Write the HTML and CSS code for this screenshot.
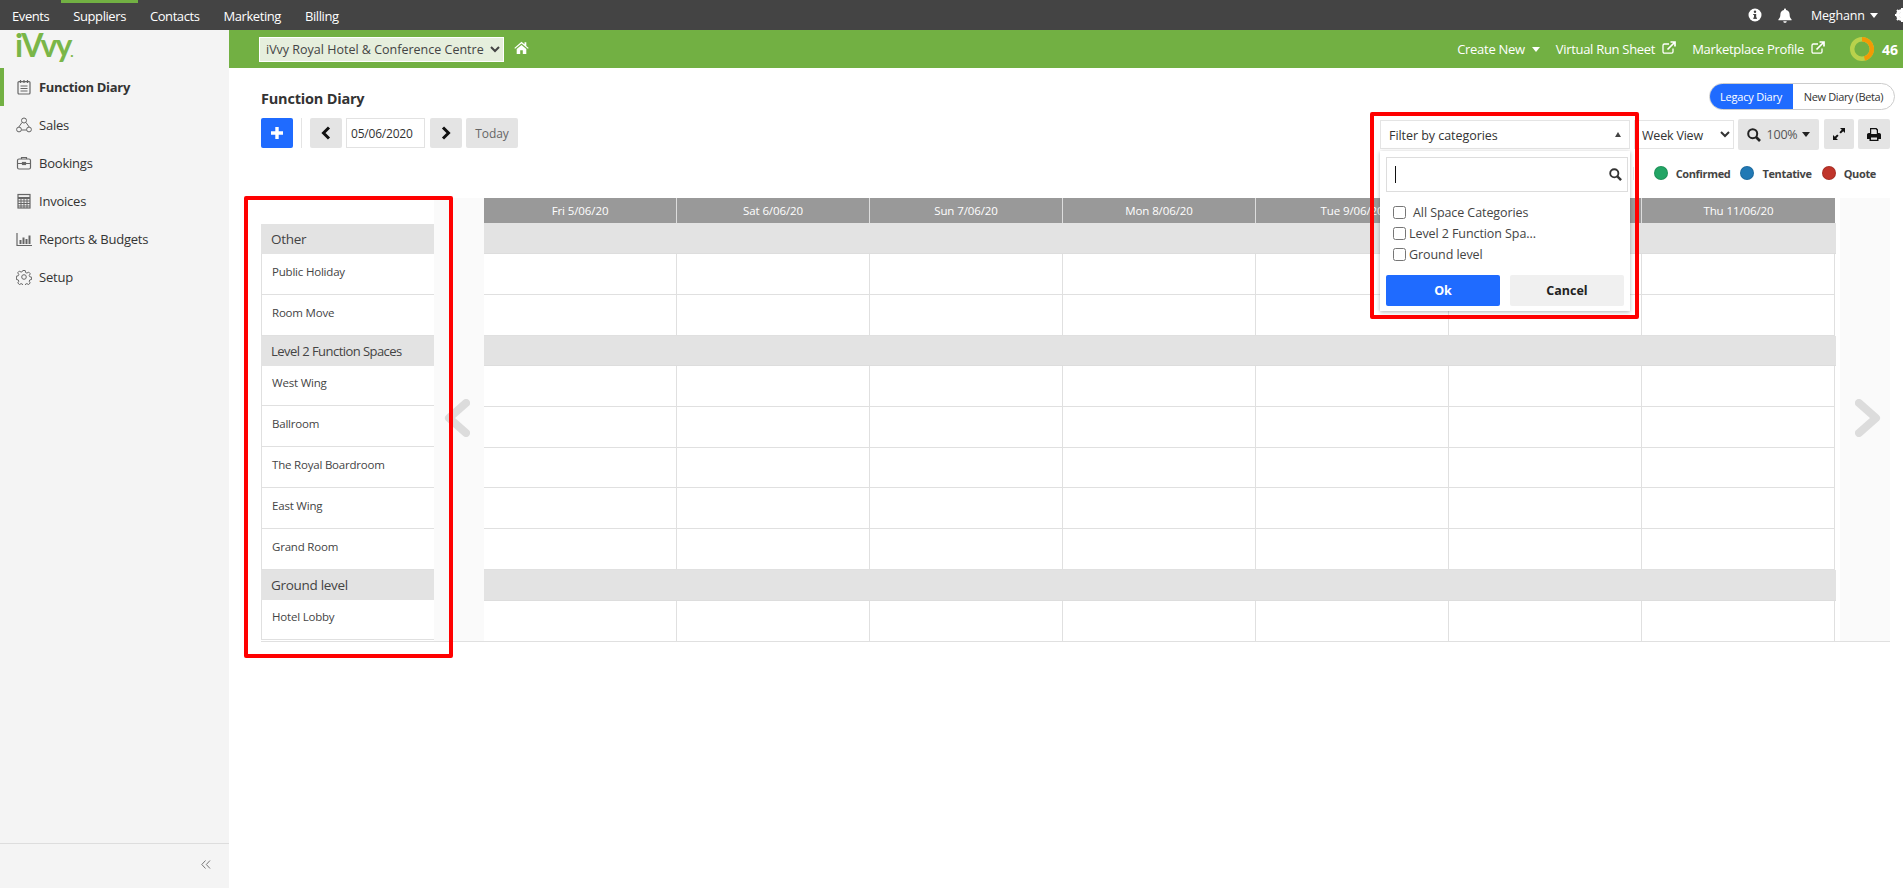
FILE: index.html
```html
<!DOCTYPE html>
<html lang="en">
<head>
<meta charset="utf-8">
<title>Function Diary</title>
<link rel="stylesheet" href="styles.css">
</head>
<body>
<header class="topbar">
  <nav class="topnav">
    <a class="topnav-item">Events</a>
    <a class="topnav-item is-active">Suppliers</a>
    <a class="topnav-item">Contacts</a>
    <a class="topnav-item">Marketing</a>
    <a class="topnav-item">Billing</a>
  </nav>
  <div class="topright">
    <svg class="ico-info" viewBox="0 0 14 14"><circle cx="7" cy="7" r="6.500" fill="#fff"/><rect x="6" y="6" width="2.200" height="4.600" fill="#444"/><rect x="5.200" y="9.600" width="3.800" height="1.200" fill="#444"/><rect x="5.200" y="6" width="2" height="1" fill="#444"/><circle cx="7" cy="3.800" r="1.200" fill="#444"/></svg>
    <svg class="ico-bell" viewBox="0 0 14 15"><path d="M7 0.500c.6 0 1 .4 1 1v.4c2.200.4 3.600 2.200 3.600 4.400 0 3 .9 4 2 5.200v.8H.4v-.8c1.100-1.200 2-2.200 2-5.200 0-2.200 1.400-4 3.600-4.400v-.4c0-.6.4-1 1-1zM5.300 13.300h3.400c0 1-.8 1.500-1.700 1.500s-1.700-.5-1.700-1.500z" fill="#fff"/></svg>
    <span class="user">Meghann</span>
    <span class="caret caret-white"></span>
    <svg class="ico-gear" viewBox="0 0 14 14"><circle cx="7" cy="7" r="4.500" fill="none" stroke="#fff" stroke-width="3"/><path d="M7 0v14M0 7h14M2 2l10 10M12 2L2 12" stroke="#fff" stroke-width="2"/></svg>
  </div>
</header>

<div class="shell">
  <aside class="sidebar">
    <div class="logo">iVvy<span class="logo-dot">.</span></div>
    <nav class="sidenav">
      <a class="sideitem is-active">
        <svg class="sideicon" viewBox="0 0 16 16" fill="none" stroke="#666" stroke-width="1.200"><rect x="2" y="2.600" width="12" height="12.400" rx="1"/><path d="M4.500 1v3M8 1v3M11.500 1v3M4.500 7h7M4.500 9.500h7M4.500 12h7"/></svg>
        <span>Function Diary</span>
      </a>
      <a class="sideitem">
        <svg class="sideicon" viewBox="0 0 16 16" fill="none" stroke="#666" stroke-width="1"><circle cx="8" cy="3.500" r="2.500"/><circle cx="3" cy="12.500" r="2.400"/><circle cx="13" cy="12.500" r="2.400"/><path d="M6 5.500L2.800 10M10 5.500l3.200 4.500M5.400 13h5.200"/></svg>
        <span>Sales</span>
      </a>
      <a class="sideitem">
        <svg class="sideicon" viewBox="0 0 16 16" fill="none" stroke="#666" stroke-width="1.200"><rect x="1.500" y="4" width="13" height="10" rx="1.500"/><path d="M5.500 4V2.500h5V4M1.500 8.500h13"/><rect x="6.500" y="7.500" width="3" height="2" fill="#666"/></svg>
        <span>Bookings</span>
      </a>
      <a class="sideitem">
        <svg class="sideicon" viewBox="0 0 16 16" fill="none" stroke="#666"><rect x="2" y="1.500" width="12" height="13.500" fill="#eee" stroke-width="1.200"/><path d="M2 5h12" stroke-width="2"/><path d="M5 6v9M8 6v9M11 6v9M2 8h12M2 10.500h12M2 13h12" stroke-width="1"/></svg>
        <span>Invoices</span>
      </a>
      <a class="sideitem">
        <svg class="sideicon" viewBox="0 0 16 16" fill="none" stroke="#666"><path d="M1 2v12.500h15" stroke-width="1.200"/><path d="M4.500 13V9M7.500 13V6.500M10.500 13V8M13.500 13V4.500" stroke-width="2"/></svg>
        <span>Reports &amp; Budgets</span>
      </a>
      <a class="sideitem">
        <svg class="sideicon" viewBox="0 0 16 16" fill="none" stroke="#666" stroke-width="1"><circle cx="8" cy="8" r="2.300"/><path d="M6.800 1.500h2.400l.4 2 1.300.6 1.800-1 1.600 1.700-1.100 1.700.6 1.300 1.800.4v2.300l-1.800.4-.6 1.300 1 1.700-1.600 1.700-1.700-1-1.300.5-.4 2H6.800l-.4-2-1.300-.5-1.700 1-1.600-1.700 1-1.700-.6-1.300-1.800-.4V7.200l1.800-.4.6-1.300-1.100-1.700 1.600-1.700 1.800 1 1.300-.6z"/></svg>
        <span>Setup</span>
      </a>
    </nav>
    <div class="sidefoot">
      <svg class="collapse" viewBox="0 0 10 9" fill="none" stroke="#777" stroke-width="1"><path d="M4.500.5L.8 4.500l3.700 4M9 .5L5.300 4.500 9 8.500"/></svg>
    </div>
  </aside>

  <div class="content">
    <div class="greenbar">
      <div class="green-left">
        <select class="hotel"><option>iVvy Royal Hotel &amp; Conference Centre</option></select>
        <svg class="ico-home" viewBox="0 0 15 13"><path d="M7.500.8L.3 6.900l.8.900L7.500 2.400l6.400 5.400.8-.9-2.400-2V1.300h-1.800v2L7.500.8zM2.700 8v5h3.500V9.300h2.600V13h3.500V8L7.500 3.900z" fill="#fff"/></svg>
      </div>
      <div class="green-right">
        <a class="glink">Create New <span class="caret caret-white"></span></a>
        <a class="glink">Virtual Run Sheet
          <svg class="ico-ext" viewBox="0 0 14 13" fill="none" stroke="#fff" stroke-width="1.300"><path d="M11 7.500v3.200c0 .9-.5 1.400-1.400 1.400H2.400C1.500 12.100 1 11.600 1 10.700V4.400C1 3.500 1.500 3 2.400 3H7"/><path d="M5.500 8.500L12.500 1.500M8.500 1h4.500v4.500" stroke-width="1.700"/></svg>
        </a>
        <a class="glink">Marketplace Profile
          <svg class="ico-ext" viewBox="0 0 14 13" fill="none" stroke="#fff" stroke-width="1.300"><path d="M11 7.500v3.200c0 .9-.5 1.400-1.400 1.400H2.400C1.500 12.100 1 11.600 1 10.700V4.400C1 3.500 1.500 3 2.400 3H7"/><path d="M5.500 8.500L12.500 1.500M8.500 1h4.500v4.500" stroke-width="1.700"/></svg>
        </a>
        <svg class="donut" viewBox="0 0 24 24" fill="none" stroke-width="4.400"><circle cx="12" cy="12" r="9.800" stroke="#b9d24c"/><path d="M12 2.200A9.800 9.800 0 0 1 14.500 21.500" stroke="#f29a05"/></svg>
        <b class="score">46</b>
      </div>
    </div>

    <main class="main">
      <div class="titlerow">
        <h1 class="title">Function Diary</h1>
        <div class="toggle">
          <a class="toggle-item is-on">Legacy Diary</a>
          <a class="toggle-item">New Diary (Beta)</a>
        </div>
      </div>

      <div class="toolbar">
        <div class="tools-left">
          <button class="btn btn-add"><svg class="ico-plus" viewBox="0 0 12 12"><path d="M4.300 0h3.400v4.300H12v3.400H7.700V12H4.300V7.700H0V4.300h4.300z" fill="#fff"/></svg></button>
          <span class="tool-sep"></span>
          <button class="btn btn-gray"><svg class="ico-chev" viewBox="0 0 10 14" fill="none" stroke="#111" stroke-width="3"><path d="M8 1.500L2.500 7 8 12.500"/></svg></button>
          <input class="date" type="text" value="05/06/2020">
          <button class="btn btn-gray"><svg class="ico-chev" viewBox="0 0 10 14" fill="none" stroke="#111" stroke-width="3"><path d="M2 1.500L7.500 7 2 12.500"/></svg></button>
          <button class="btn btn-today">Today</button>
        </div>
        <div class="tools-right">
          <div class="filter">
            <div class="filter-head"><span>Filter by categories</span><span class="caret-up"></span></div>
            <div class="filter-panel">
              <div class="filter-search">
                <span class="text-caret"></span>
                <svg class="ico-search-sm" viewBox="0 0 14 14" fill="none" stroke="#333" stroke-width="2"><circle cx="5.700" cy="5.700" r="4.400"/><path d="M9 9l4 4" stroke-width="2.600"/></svg>
              </div>
              <label class="check check-all"><input type="checkbox"><span>All Space Categories</span></label>
              <label class="check"><input type="checkbox"><span>Level 2 Function Spa...</span></label>
              <label class="check"><input type="checkbox"><span>Ground level</span></label>
              <div class="filter-actions">
                <button class="fbtn fbtn-ok">Ok</button>
                <button class="fbtn fbtn-cancel">Cancel</button>
              </div>
            </div>
          </div>
          <select class="view"><option>Week View</option></select>
          <button class="btn btn-zoom"><svg class="ico-search" viewBox="0 0 14 14" fill="none" stroke="#222" stroke-width="2"><circle cx="5.700" cy="5.700" r="4.500"/><path d="M9 9l4 4" stroke-width="2.600"/></svg><span>100%</span><span class="caret caret-dark"></span></button>
          <button class="btn btn-icon"><svg class="ico-expand" viewBox="0 0 12 12"><path d="M7 0h5v5l-1.800-1.800-2.400 2.400-1.400-1.400 2.400-2.400zM5 12H0V7l1.800 1.800 2.400-2.400 1.400 1.400-2.400 2.400z" fill="#111"/></svg></button>
          <button class="btn btn-icon btn-print"><svg class="ico-print" viewBox="0 0 14 13"><path d="M3 0h6.500L11 1.500V5h1.200C13.200 5 14 5.800 14 6.800V11h-2.500v2h-9v-2H0V6.800C0 5.800.8 5 1.800 5H3zm1.200 1.200V6h5.600V2.500L8.800 1.200zM4 9.500v2.300h6V9.500z" fill="#111"/></svg></button>
        </div>
      </div>

      <div class="legend">
        <span class="legend-sep"></span>
        <span class="legend-item"><i class="dot dot-green"></i>Confirmed</span>
        <span class="legend-item"><i class="dot dot-blue"></i>Tentative</span>
        <span class="legend-item"><i class="dot dot-red"></i>Quote</span>
      </div>

      <section class="diary">
        <div class="rooms">
          <div class="room-cat">Other</div>
          <div class="room">Public Holiday</div>
          <div class="room">Room Move</div>
          <div class="room-cat room-cat-long">Level 2 Function Spaces</div>
          <div class="room">West Wing</div>
          <div class="room">Ballroom</div>
          <div class="room">The Royal Boardroom</div>
          <div class="room">East Wing</div>
          <div class="room">Grand Room</div>
          <div class="room-cat">Ground level</div>
          <div class="room">Hotel Lobby</div>
        </div>
        <div class="gutter"><svg class="arrow" viewBox="0 0 26 38" fill="none" stroke="#dcdcdc" stroke-width="8" stroke-linecap="round" stroke-linejoin="round"><path d="M22 4L5 19l17 15"/></svg></div>
        <div class="days">
          <div class="dayhead">
            <div class="dh">Fri 5/06/20</div><div class="dh">Sat 6/06/20</div><div class="dh">Sun 7/06/20</div><div class="dh">Mon 8/06/20</div><div class="dh">Tue 9/06/20</div><div class="dh"></div><div class="dh">Thu 11/06/20</div>
          </div>
          <div class="daycat daycat-first"></div>
          <div class="dayrow"><div class="c"></div><div class="c"></div><div class="c"></div><div class="c"></div><div class="c"></div><div class="c"></div><div class="c"></div></div>
          <div class="dayrow"><div class="c"></div><div class="c"></div><div class="c"></div><div class="c"></div><div class="c"></div><div class="c"></div><div class="c"></div></div>
          <div class="daycat"></div>
          <div class="dayrow"><div class="c"></div><div class="c"></div><div class="c"></div><div class="c"></div><div class="c"></div><div class="c"></div><div class="c"></div></div>
          <div class="dayrow"><div class="c"></div><div class="c"></div><div class="c"></div><div class="c"></div><div class="c"></div><div class="c"></div><div class="c"></div></div>
          <div class="dayrow"><div class="c"></div><div class="c"></div><div class="c"></div><div class="c"></div><div class="c"></div><div class="c"></div><div class="c"></div></div>
          <div class="dayrow"><div class="c"></div><div class="c"></div><div class="c"></div><div class="c"></div><div class="c"></div><div class="c"></div><div class="c"></div></div>
          <div class="dayrow"><div class="c"></div><div class="c"></div><div class="c"></div><div class="c"></div><div class="c"></div><div class="c"></div><div class="c"></div></div>
          <div class="daycat"></div>
          <div class="dayrow dayrow-last"><div class="c"></div><div class="c"></div><div class="c"></div><div class="c"></div><div class="c"></div><div class="c"></div><div class="c"></div></div>
        </div>
        <div class="gutter gutter-right"><svg class="arrow" viewBox="0 0 26 38" fill="none" stroke="#dcdcdc" stroke-width="8" stroke-linecap="round" stroke-linejoin="round"><path d="M4 4l17 15L4 34"/></svg></div>
      </section>
    </main>
  </div>
</div>

<div class="mark mark-rooms"></div>
<div class="mark mark-filter"></div>
</body>
</html>
```

FILE: styles.css
```css
* { box-sizing: border-box; }
html, body { margin: 0; height: 100%; }
body {
  font-family: "Open Sans", "Noto Sans", sans-serif;
  font-size: 13px;
  color: #333;
  background: #fff;
  overflow: hidden;
  position: relative;
}
a { color: inherit; text-decoration: none; }
button { font-family: inherit; }

.caret { display: inline-block; flex: none; width: 0; height: 0; border-left: 4px solid transparent; border-right: 4px solid transparent; border-top: 5px solid #fff; }
.caret-dark { border-top-color: #222; margin-left: 5px; }

/* top bar */
.topbar { height: 30px; background: #444; display: flex; justify-content: space-between; color: #fff; }
.topnav { display: flex; }
.topnav-item { font-size: 13px; line-height: 30px; padding: 1px 12px 0; letter-spacing: -.42px; position: relative; }
.topnav-item.is-active::before { content: ""; position: absolute; left: 0; right: 0; top: 0; height: 3px; background: #72b043; }
.topright { display: flex; align-items: center; width: 155px; flex: none; overflow: hidden; }
.ico-info { width: 14px; height: 14px; flex: none; }
.ico-bell { width: 14px; height: 15px; margin-left: 16px; flex: none; }
.user { font-size: 12.500px; margin-left: 19px; letter-spacing: -.2px; width: 51px; flex: none; }
.topright .caret { margin-left: 8px; }
.ico-gear { width: 14px; height: 14px; margin-left: 17px; flex: none; }

.shell { display: flex; height: 858px; }

/* sidebar */
.sidebar { width: 229px; flex: none; background: #f4f4f4; display: flex; flex-direction: column; }
.logo { height: 38px; padding-left: 15px; font-family: "Lato", sans-serif; font-size: 32px; font-weight: 700; line-height: 29px; color: #7ab648; letter-spacing: -2px; }
.logo-dot { font-size: 14px; letter-spacing: 0; }
.sidenav { flex: 1; }
.sideitem { display: flex; align-items: center; height: 38px; border-left: 4px solid transparent; padding-left: 12px; font-size: 13px; letter-spacing: -.22px; color: #333; }
.sideitem span { margin-left: 7px; }
.sideitem.is-active { border-left-color: #72b043; font-weight: 700; letter-spacing: -.3px; }
.sideicon { width: 16px; height: 16px; flex: none; }
.sidefoot { height: 45px; border-top: 1px solid #ddd; display: flex; justify-content: flex-end; padding: 16px 18px 0 0; }
.collapse { width: 10px; height: 9px; }

.content { flex: 1; min-width: 0; display: flex; flex-direction: column; }

/* green bar */
.greenbar { height: 38px; background: #72b043; display: flex; justify-content: space-between; align-items: center; color: #fff; }
.green-left { display: flex; align-items: center; padding-left: 30px; }
.hotel { width: 245px; height: 25px; padding: 0 0 0 2px; font-family: inherit; font-size: 12.500px; letter-spacing: 0; color: #444; background-color: #e6efdd; border: 1px solid #fff; border-radius: 0; }
.ico-home { width: 15px; height: 13px; margin-left: 10px; margin-top: -3px; }
.green-right { display: flex; align-items: center; padding-right: 6px; }
.glink { display: flex; align-items: center; font-size: 13px; letter-spacing: -.3px; margin-right: 16px; white-space: nowrap; }
.glink .caret { margin-left: 7px; }
.ico-ext { width: 14px; height: 13px; margin-left: 7px; margin-top: -3px; flex: none; }
.donut { width: 24px; height: 24px; margin-left: 9px; flex: none; }
.score { font-size: 14px; margin-left: 8px; width: 15px; }

/* main */
.main { flex: 1; padding: 0 13px 0 32px; }
.titlerow { display: flex; justify-content: space-between; padding-top: 15px; }
.title { margin: 5px 0 0; font-size: 14.500px; line-height: 22px; font-weight: 700; color: #333; letter-spacing: -.2px; }
.toggle { display: flex; height: 27px; border: 1px solid #ccc; border-radius: 14px; overflow: hidden; font-size: 11px; margin-right: -5px; }
.toggle-item { display: flex; align-items: center; justify-content: center; color: #333; width: 101px; letter-spacing: -.38px; }
.toggle-item.is-on { width: 84px; background: #1f6bff; color: #fff; margin: -1px 0 -1px -1px; letter-spacing: -.2px; }

.toolbar { display: flex; justify-content: space-between; height: 32px; margin-top: 8px; }
.tools-left { display: flex; align-items: flex-start; }
.tools-right { display: flex; align-items: flex-start; padding-top: 1px; }
.btn { border: 0; padding: 0; border-radius: 2px; height: 30px; display: flex; align-items: center; justify-content: center; }
.btn-add { width: 32px; background: #1f6bff; }
.ico-plus { width: 12px; height: 12px; }
.tool-sep { width: 1px; height: 30px; background: #e4e4e4; margin: 0 8px; }
.btn-gray { width: 32px; background: #e4e4e4; }
.ico-chev { width: 10px; height: 14px; }
.date { width: 79px; height: 30px; margin: 0 5px 0 4px; padding: 0 4px; border: 1px solid #e2e2e2; font-family: inherit; font-size: 12px; letter-spacing: -.2px; color: #333; }
.btn-today { width: 52px; margin-left: 4px; background: #e4e4e4; color: #666; font-size: 12px; letter-spacing: -.1px; }

.filter { position: relative; width: 250px; margin-top: 1px; margin-right: 4px; }
.filter-head { height: 29px; display: flex; align-items: center; justify-content: space-between; padding: 2px 8px 0 8px; border: 1px solid #e4e4e4; font-size: 12.500px; letter-spacing: -.05px; }
.caret-up { width: 0; height: 0; margin-top: -2px; border-left: 3.500px solid transparent; border-right: 3.500px solid transparent; border-bottom: 5px solid #444; }
.filter-panel { position: absolute; z-index: 2; left: 0; top: 31px; width: 250px; height: 160px; padding: 6px 6px 0; background: #fff; box-shadow: 0 1px 4px rgba(0,0,0,.3); }
.filter-search { height: 35px; margin-right: -4px; border: 1px solid #ddd; display: flex; align-items: center; justify-content: space-between; padding: 0 5px 0 8px; }
.text-caret { width: 1px; height: 17px; background: #111; }
.ico-search-sm { width: 13px; height: 13px; }
.check { display: flex; align-items: center; height: 21px; padding-left: 7px; font-size: 12.500px; letter-spacing: -.08px; color: #444; white-space: nowrap; }
.check input { width: 13px; height: 13px; margin: 0 3px 0 0; }
.check-all { margin-top: 9px; height: 22px; }
.check-all input { margin-right: 7px; }
.filter-actions { display: flex; gap: 10px; margin-top: 10px; }
.fbtn { width: 115px; height: 31px; border: 0; border-radius: 2px; font-size: 12.500px; font-weight: 700; }
.fbtn-ok { background: #1f6bff; color: #fff; }
.fbtn-cancel { background: #f0f0f0; color: #222; }

.view { width: 100px; height: 29px; margin-top: 1px; padding: 2px 0 0 3px; font-family: inherit; font-size: 12.500px; letter-spacing: -.2px; color: #333; background: #fff; border: 1px solid #e4e4e4; border-radius: 0; }
.btn-zoom { width: 81px; height: 31px; margin-left: 4px; background: #e4e4e4; color: #555; font-size: 12.500px; }
.btn-zoom span:first-of-type { margin-left: 6px; letter-spacing: -.2px; }
.ico-search { width: 14px; height: 14px; }
.btn-icon { width: 30px; margin-left: 5px; background: #e4e4e4; }
.btn-print { width: 32px; margin-left: 4px; }
.ico-expand { width: 12px; height: 12px; }
.ico-print { width: 14px; height: 13px; }

.legend { display: flex; justify-content: flex-end; align-items: center; height: 14px; margin-top: 16px; padding-right: 14px; position: relative; font-size: 11px; font-weight: 700; color: #444; letter-spacing: -.35px; }
.legend-sep { position: absolute; left: 1372px; top: 1px; width: 1px; height: 13px; background: #e8e8e8; }
.legend-item { display: flex; align-items: center; margin-left: 10px; }
.dot { width: 14px; height: 14px; border-radius: 50%; margin-right: 8px; border: 1px solid rgba(0,0,0,.12); }
.dot-green { background: #22a565; }
.dot-blue { background: #2179b5; }
.dot-red { background: #c0342a; }

/* diary grid */
.diary { display: flex; margin-top: 18px; border-bottom: 1px solid #e0e0e0; }
.rooms { width: 173px; flex: none; padding-top: 26px; }
.room-cat { height: 30px; padding: 1px 0 0 10px; line-height: 29px; background: #e3e3e3; font-size: 13.500px; letter-spacing: -.3px; color: #444; }
.room-cat-long { font-size: 13px; letter-spacing: -.55px; }
.room { height: 40.800px; padding: 7.800px 0 0 10px; line-height: 20px; border-left: 1px solid #e0e0e0; border-bottom: 1px solid #e0e0e0; font-size: 11.500px; letter-spacing: -.2px; color: #444; }
.gutter { width: 50px; flex: none; background: #fafafa; display: flex; align-items: center; justify-content: center; padding: 0 4px 4px 0; }
.gutter-right { margin-left: 5px; padding: 0 0 4px 5px; }
.arrow { width: 26px; height: 38px; flex: none; }
.days { width: 1351px; flex: none; }
.dayhead { display: flex; height: 25px; background: #999; }
.dh { width: 193px; flex: none; border-right: 1px solid #ddd; text-align: center; line-height: 25px; color: #fff; font-size: 11.500px; letter-spacing: -.1px; }
.dh:last-child { border-right: 0; }
.daycat { height: 30.500px; margin-right: -1px; background: #e3e3e3; border-bottom: 1px solid #ddd; }
.daycat-first { height: 31px; }
.dayrow { display: flex; height: 40.800px; }
.c { width: 193px; flex: none; border-right: 1px solid #e0e0e0; border-bottom: 1px solid #e0e0e0; }
.dayrow-last .c { border-bottom: 0; }

/* annotation boxes */
.mark { position: absolute; z-index: 5; border: 4px solid #f00; border-radius: 2px; pointer-events: none; }
.mark-rooms { left: 244px; top: 196px; width: 209px; height: 462px; }
.mark-filter { left: 1370px; top: 112px; width: 269px; height: 207px; }
```
